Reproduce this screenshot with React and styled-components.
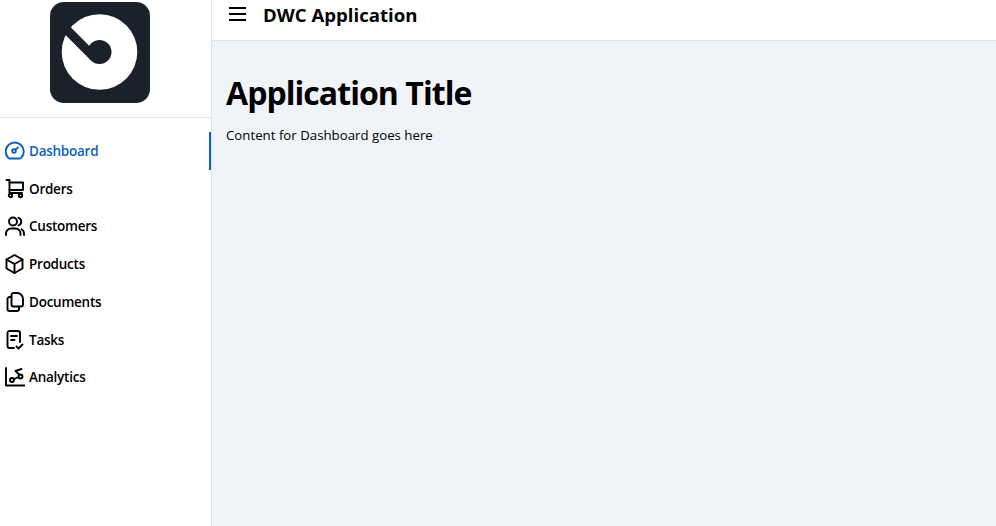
import React from "react";
import styled, { createGlobalStyle } from "styled-components";

const Global = createGlobalStyle`
  html, body { margin: 0; padding: 0; height: 100%; }
  body { font-family: "Open Sans", "Noto Sans", sans-serif; color: #000; background: #fff; }
  #root { height: 100%; }
`;
const Shell = styled.div`
  display: grid;
  grid-template-columns: 212px 1fr;
  height: 526px;
  overflow: hidden;
`;
const Drawer = styled.aside`
  border-right: 1px solid #dde3ee;
  background: #fff;
  display: flex;
  flex-direction: column;
`;
const LogoBox = styled.div`
  height: 115px;
  border-bottom: 1px solid #e1e6f0;
  display: flex;
  justify-content: center;
  padding: 2px 11px 0 0;
`;
const Nav = styled.nav`
  display: flex;
  flex-direction: column;
  padding-top: 14px;
`;
const Item = styled.a`
  display: flex;
  align-items: center;
  gap: 4px;
  height: 37.75px;
  padding-left: 5px;
  font-size: 13.5px;
  font-weight: 600;
  letter-spacing: -0.25px;
  color: ${(p) => (p.$active ? "#0b62bd" : "#000")};
  box-shadow: ${(p) => (p.$active ? "inset -2px 0 0 #0b62bd" : "none")};
  svg { flex: none; }
`;
const Main = styled.div`
  display: flex;
  flex-direction: column;
  min-width: 0;
`;
const Header = styled.header`
  height: 28px;
  border-bottom: 1px solid #dde3ee;
  background: #fff;
  display: flex;
  align-items: center;
  gap: 17px;
  padding: 0 0 12px 17px;
`;
const Burger = styled.svg`
  display: block;
`;
const AppName = styled.div`
  font-size: 18.6px;
  font-weight: 700;
`;
const Content = styled.main`
  flex: 1;
  background: #f0f3f8;
  padding: 30px 14px;
`;
const Title = styled.h1`
  margin: 0;
  font-size: 32px;
  line-height: 44px;
  font-weight: 700;
  letter-spacing: -0.95px;
`;
const Body = styled.p`
  margin: 10px 0 0;
  font-size: 13.25px;
  line-height: 20px;
`;

const Icon = ({ children }) => (
  <svg width="20" height="20" viewBox="0 0 20 20" fill="none" stroke="currentColor" strokeWidth="1.9" strokeLinecap="round" strokeLinejoin="round">
    {children}
  </svg>
);

const items = [
  ["Dashboard", <><path d="M5 17.5h9.5a2.5 2.5 0 0 0 2-1 9 9 0 1 0-13.5 0 2.5 2.5 0 0 0 1.5 1z" /><circle cx="9" cy="10" r="1.8" /><path d="M10.5 8.5L13 6.5" /></>],
  ["Orders", <><circle cx="5.5" cy="16.5" r="1.7" /><circle cx="15.5" cy="16.5" r="1.7" /><path d="M1.5 1H4.5V14H17" /><path d="M4.5 3.5H18V11H4.5" /></>],
  ["Customers", <><circle cx="8" cy="5.5" r="4" /><path d="M1 19v-1.5a5 5 0 0 1 5-5h4.5a5 5 0 0 1 5 5V19" /><path d="M13.5 1.8a4 4 0 0 1 0 7.6" /><path d="M19 19v-1.5a5 5 0 0 0-2.5-4.3" /></>],
  ["Products", <><path d="M9.5 1l8 4.5v9l-8 4.5-8-4.5v-9z" /><path d="M1.5 5.5l8 4.5 8-4.5M9.5 10v9" /></>],
  ["Documents", <><path d="M12 1H8.5a2 2 0 0 0-2 2v9.5a2 2 0 0 0 2 2H16a2 2 0 0 0 2-2V7a6 6 0 0 0-6-6z" /><path d="M14 14.5V17a2 2 0 0 1-2 2H4.5a2 2 0 0 1-2-2V7a2 2 0 0 1 2-2h2" /></>],
  ["Tasks", <><path d="M9 18H4.5a2 2 0 0 1-2-2V3a2 2 0 0 1 2-2H13a2 2 0 0 1 2 2v9" /><path d="M6 6h6M6 10h3.5" /><path d="M11.5 16.5l2 2 4-4" /></>],
  ["Analytics", <><path d="M1 1v17.5h18.5" /><circle cx="7" cy="13" r="2" /><circle cx="15.5" cy="9.5" r="2" /><path d="M9 12l4.6-2M14.5 7.8L10.5 4l6-2" /></>],
];

export default function App() {
  return (
    <>
      <Global />
      <Shell>
        <Drawer>
          <LogoBox>
            <svg width="100" height="101" viewBox="0 0 100 101">
              <rect width="100" height="101" rx="14" fill="#1a212a" />
              <circle cx="49.5" cy="50" r="37.8" fill="#fff" />
              <path d="M44.2 55.3 L12 23" stroke="#1a212a" strokeWidth="9" />
              <circle cx="49.5" cy="50" r="12" fill="#1a212a" />
            </svg>
          </LogoBox>
          <Nav>
            {items.map(([label, art], i) => (
              <Item key={label} $active={i === 0}>
                <Icon>{art}</Icon>
                {label}
              </Item>
            ))}
          </Nav>
        </Drawer>
        <Main>
          <Header>
            <Burger width="17" height="14" viewBox="0 0 17 14" stroke="#000" strokeWidth="2">
              <path d="M0 1h17M0 7h17M0 13h17" />
            </Burger>
            <AppName>DWC Application</AppName>
          </Header>
          <Content>
            <Title>Application Title</Title>
            <Body>Content for Dashboard goes here</Body>
          </Content>
        </Main>
      </Shell>
    </>
  );
}
